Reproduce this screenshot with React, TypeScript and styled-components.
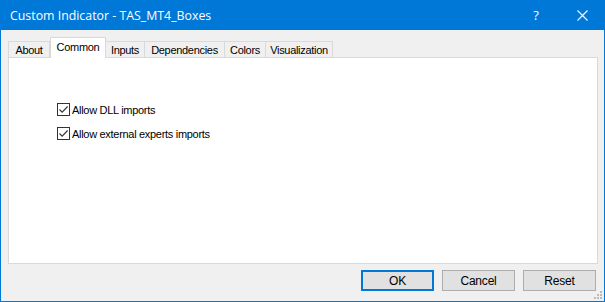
import styled, { createGlobalStyle } from 'styled-components'

const GlobalStyle = createGlobalStyle`
  html, body {
    margin: 0;
    padding: 0;
    background: #ffffff;
  }
  body {
    font-family: 'Liberation Sans', Arial, sans-serif;
    font-size: 11px;
    letter-spacing: -0.3px;
    color: #000;
  }
`

const tabs = [
  { label: 'About', width: 42 },
  { label: 'Common', width: 56, active: true },
  { label: 'Inputs', width: 40 },
  { label: 'Dependencies', width: 81 },
  { label: 'Colors', width: 42 },
  { label: 'Visualization', width: 68 }
]

const options = ['Allow DLL imports', 'Allow external experts imports']

export default function App() {
  return (
    <>
      <GlobalStyle />
      <Window>
        <TitleBar>
          <Title>Custom Indicator - TAS_MT4_Boxes</Title>
          <TitleButton>?</TitleButton>
          <TitleButton>
            <svg width='11' height='11' viewBox='0 0 11 11'>
              <path d='M0.5 0.5 L10.5 10.5 M10.5 0.5 L0.5 10.5' stroke='#fff' strokeWidth='1.1' />
            </svg>
          </TitleButton>
        </TitleBar>
        <Body>
          <TabStrip>
            {tabs.map((t) => (
              <Tab key={t.label} $active={!!t.active} $width={t.width}>
                {t.label}
              </Tab>
            ))}
          </TabStrip>
          <Panel>
            {options.map((o) => (
              <CheckRow key={o}>
                <CheckBox>
                  <svg width='11' height='11' viewBox='0 0 11 11'>
                    <path d='M1.5 5.5 L4.2 8.2 L9.6 2.5' stroke='#333' strokeWidth='1.1' fill='none' />
                  </svg>
                </CheckBox>
                <span>{o}</span>
              </CheckRow>
            ))}
          </Panel>
          <ButtonRow>
            <Button $default>OK</Button>
            <Button>Cancel</Button>
            <Button>Reset</Button>
          </ButtonRow>
          <Grip>
            <svg width='10' height='10' viewBox='0 0 10 10'>
              {[
                [8, 2], [8, 5], [8, 8], [5, 5], [5, 8], [2, 8]
              ].map(([x, y]) => (
                <rect key={`${x}-${y}`} x={x - 1} y={y - 1} width='2' height='2' fill='#bcbcbc' />
              ))}
            </svg>
          </Grip>
        </Body>
      </Window>
    </>
  )
}

const Window = styled.div`
  width: 605px;
  height: 302px;
  box-sizing: border-box;
  border: 1px solid #0078d7;
  border-top: none;
  display: flex;
  flex-direction: column;
  background: #f0f0f0;
`

const TitleBar = styled.div`
  height: 30px;
  background: #0078d7;
  display: flex;
  align-items: center;
  padding-left: 10px;
  margin: 0 -1px;
  color: #fff;
`

const Title = styled.div`
  flex: 1;
  font-family: 'Open Sans', 'Noto Sans', sans-serif;
  font-size: 12.35px;
  letter-spacing: 0;
`

const TitleButton = styled.div`
  width: 46px;
  height: 30px;
  display: flex;
  align-items: center;
  justify-content: center;
  font-family: 'Open Sans', sans-serif;
  font-size: 13px;
  letter-spacing: 0;
`

const Body = styled.div`
  position: relative;
  flex: 1;
  display: flex;
  flex-direction: column;
  padding: 8px 6px 0 6px;
`

const TabStrip = styled.div`
  display: flex;
  align-items: flex-end;
  height: 20px;
  position: relative;
  z-index: 1;
  margin-bottom: -1px;
`

const Tab = styled.div<{ $active: boolean; $width: number }>`
  box-sizing: border-box;
  flex: none;
  width: ${({ $width }) => $width}px;
  height: ${({ $active }) => ($active ? 21 : 17)}px;
  border: 1px solid #d9d9d9;
  border-bottom: ${({ $active }) => ($active ? 'none' : '1px solid #d9d9d9')};
  margin-left: ${({ $active }) => ($active ? 0 : -1)}px;
  background: ${({ $active }) => ($active ? '#fff' : '#f0f0f0')};
  display: flex;
  align-items: center;
  justify-content: center;
  padding-bottom: ${({ $active }) => ($active ? 3 : 0)}px;
  padding-top: ${({ $active }) => ($active ? 0 : 1)}px;
  white-space: nowrap;
  &:first-child {
    margin-left: 1px;
  }
`

const Panel = styled.div`
  height: 207px;
  box-sizing: border-box;
  margin-left: 1px;
  border: 1px solid #d9d9d9;
  background: #fff;
  padding: 44px 0 0 48px;
  display: flex;
  flex-direction: column;
  gap: 9px;
`

const CheckRow = styled.div`
  display: flex;
  align-items: center;
  gap: 2px;
  height: 15px;
`

const CheckBox = styled.div`
  width: 13px;
  height: 13px;
  box-sizing: border-box;
  border: 1px solid #333;
  background: #fff;
  display: flex;
  align-items: center;
  justify-content: center;
`

const ButtonRow = styled.div`
  display: flex;
  justify-content: flex-end;
  gap: 8px;
  margin-top: 6px;
  padding-right: 2px;
`

const Button = styled.div<{ $default?: boolean }>`
  width: 73px;
  height: 21px;
  box-sizing: border-box;
  background: #e1e1e1;
  border: ${({ $default }) => ($default ? '2px solid #0078d7' : '1px solid #adadad')};
  display: flex;
  align-items: center;
  justify-content: center;
  font-size: 12px;
  letter-spacing: -0.2px;
`

const Grip = styled.div`
  position: absolute;
  right: 1px;
  bottom: 1px;
  width: 10px;
  height: 10px;
`
